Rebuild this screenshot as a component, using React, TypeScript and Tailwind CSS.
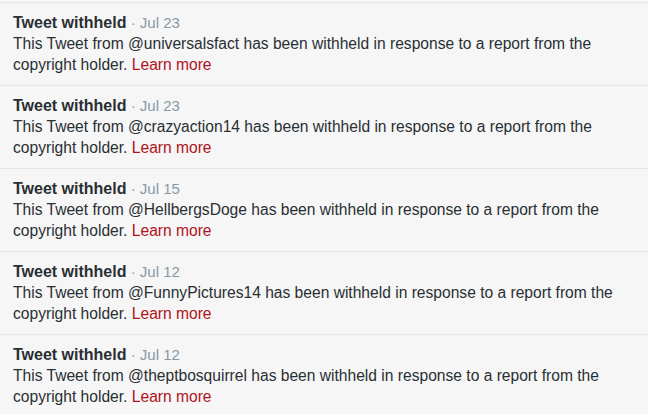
import React from "react";

const items = [
  { user: "universalsfact", date: "Jul 23" },
  { user: "crazyaction14", date: "Jul 23" },
  { user: "HellbergsDoge", date: "Jul 15" },
  { user: "FunnyPictures14", date: "Jul 12" },
  { user: "theptbosquirrel", date: "Jul 12" },
];

export default function App() {
  return (
    <div
      className="w-[648px] h-[414px] overflow-hidden bg-[#f6f6f6] pt-[2px]"
      style={{ fontFamily: '"Liberation Sans", Arial, sans-serif' }}
    >
      {items.map((it, i) => (
        <div
          key={i}
          className="border-t border-[#e1e8ed] pl-[13px] pr-[30px] pt-[9px] pb-[10px] text-[15.6px] leading-[21px] text-[#292f33]"
        >
          <div className="h-[21px] whitespace-nowrap">
            <span className="font-bold text-[16px]">Tweet withheld</span>
            <span className="text-[#8899a6] text-[15px]"> · {it.date}</span>
          </div>
          <p>
            This Tweet from @{it.user} has been withheld in response to a report from the copyright holder.{" "}
            <a className="text-[#b0121b]">Learn more</a>
          </p>
        </div>
      ))}
    </div>
  );
}
